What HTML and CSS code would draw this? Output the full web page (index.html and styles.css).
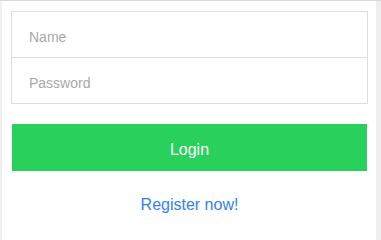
FILE: index.html
```html
<!DOCTYPE html>
<html lang="en">
<head>
<meta charset="utf-8">
<title>Login</title>
<link rel="stylesheet" href="styles.css">
</head>
<body>
<main class="card">
  <form class="login-form">
    <div class="field-group">
      <input class="field" type="text" placeholder="Name">
      <input class="field" type="password" placeholder="Password">
    </div>
    <button class="login-btn" type="button">Login</button>
    <div class="register">
      <a class="register-link" href="#">Register now!</a>
    </div>
  </form>
</main>
</body>
</html>
```
FILE: styles.css
```css
* {
  box-sizing: border-box;
}
html {
  background: #efefef;
}
body {
  margin: 0;
  background: #efefef;
  border-top: 1px solid #dadada;
  font-family: "Liberation Sans", Arial, sans-serif;
  overflow: hidden;
}
.card {
  background: #ffffff;
  margin: 0 5px 0 2px;
  padding: 10px 8px 0 9px;
  min-height: calc(100vh - 1px);
}
.login-form {
  display: flex;
  flex-direction: column;
  margin: 0;
}
.field-group {
  display: flex;
  flex-direction: column;
  border: 1px solid #dddddd;
}
.field {
  display: block;
  width: 100%;
  height: 45px;
  border: 0;
  margin: 0;
  padding: 4px 16px 0 17px;
  line-height: 41px;
  font-family: inherit;
  font-size: 14px;
  color: #333;
  background: #fff;
  outline: none;
}
.field + .field {
  border-top: 1px solid #dddddd;
  height: 46px;
}
.field::placeholder {
  color: #a8a8a8;
}
.login-btn {
  margin: 20px 1px 0 1px;
  height: 47px;
  padding: 4px 0 0 0;
  border: 0;
  border-radius: 0;
  background: #29d05c;
  color: #ffffff;
  font-family: inherit;
  font-size: 16px;
  line-height: 43px;
  text-align: center;
}
.register {
  margin-top: 24px;
  text-align: center;
  line-height: 20px;
}
.register-link {
  color: #3181f5;
  font-size: 16px;
  text-decoration: none;
}
```
